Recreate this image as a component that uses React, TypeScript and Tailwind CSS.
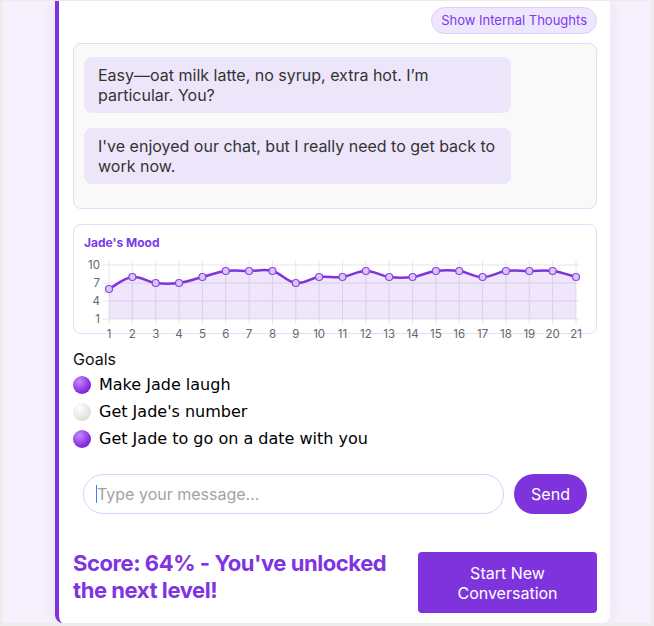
import React from "react";

const mood = [6, 8, 7, 7, 8, 9, 9, 9, 7, 8, 8, 9, 8, 8, 9, 9, 8, 9, 9, 9, 8];

const goals = [
    { label: "Make Jade laugh", done: true },
    { label: "Get Jade's number", done: false },
    { label: "Get Jade to go on a date with you", done: true },
];

const px = (i: number) => 35 + i * 23.35;
const py = (v: number) => 40 + (10 - v) * 6;

// chart.js-ish smoothing (tension 0.4)
function linePath() {
    const pts = mood.map((v, i) => [px(i), py(v)]);
    let d = `M${pts[0][0]},${pts[0][1]}`;
    for (let i = 0; i < pts.length - 1; i++) {
        const p0 = pts[i - 1] || pts[i];
        const p1 = pts[i];
        const p2 = pts[i + 1];
        const p3 = pts[i + 2] || p2;
        const t = 0.4 / 2;
        const c1 = [p1[0] + (p2[0] - p0[0]) * t, p1[1] + (p2[1] - p0[1]) * t];
        const c2 = [p2[0] - (p3[0] - p1[0]) * t, p2[1] - (p3[1] - p1[1]) * t];
        d += ` C${c1[0]},${c1[1]} ${c2[0]},${c2[1]} ${p2[0]},${p2[1]}`;
    }
    return d;
}

function MoodChart() {
    const line = linePath();
    const area = `${line} L${px(20)},94 L${px(0)},94 Z`;
    return (
        <svg width="524" height="112" className="absolute left-0 top-0 overflow-visible">
            {[10, 7, 4, 1].map((v) => (
                <g key={v}>
                    <line x1={28} x2={px(20) + 3} y1={py(v)} y2={py(v)} stroke="#e6e6e6" strokeWidth="1" />
                    <text x={26} y={py(v) + 4} textAnchor="end" fontSize="11.5" fill="#666" fontFamily="Inter, sans-serif">
                        {v}
                    </text>
                </g>
            ))}
            {mood.map((_, i) => (
                <g key={i}>
                    <line x1={px(i)} x2={px(i)} y1={36} y2={99} stroke="#e6e6e6" strokeWidth="1" />
                    <text x={px(i)} y={113} textAnchor="middle" fontSize="11.5" fill="#666" fontFamily="Inter, sans-serif">
                        {i + 1}
                    </text>
                </g>
            ))}
            <path d={area} fill="#7e33dd" fillOpacity="0.12" />
            <path d={line} fill="none" stroke="#7e33dd" strokeWidth="2.5" />
            {mood.map((v, i) => (
                <circle key={i} cx={px(i)} cy={py(v)} r="3.5" fill="#d9c6f6" stroke="#8a45e0" strokeWidth="1.2" />
            ))}
        </svg>
    );
}

export default function App() {
    return (
        <div className="w-[654px] h-[626px] bg-[#ececec] pt-px px-[3px] pb-[3px] font-['Inter',sans-serif]">
            <div className="h-full bg-[#f6f1fd] overflow-hidden">
                <div className="ml-[52px] w-[555px] h-full bg-white border-l-4 border-[#7e33dd] rounded-b-lg shadow-[0_0_18px_rgba(60,20,120,0.08)] pl-[14px] pr-[13px] pt-[6px] flex flex-col">
                    {/* Toggle */}
                    <div className="flex justify-end">
                        <button className="h-[27px] px-[9px] rounded-full bg-[#eee6fd] border border-[#dccdfb] text-[13px] text-[#7c3aed] leading-none">
                            Show Internal Thoughts
                        </button>
                    </div>

                    {/* Messages */}
                    <div className="mt-[9px] h-[166px] bg-[#f9f9f9] border border-[#e6dbfc] rounded-lg pt-[13px] px-[10px] flex flex-col gap-[15px]">
                        <div className="w-[427px] bg-[#ede6fb] rounded-lg px-[14px] py-[8px] text-[16px] leading-[20px] text-[#333]">
                            Easy—oat milk latte, no syrup, extra hot. I’m particular. You?
                        </div>
                        <div className="w-[427px] bg-[#ede6fb] rounded-lg px-[14px] py-[8px] text-[16px] leading-[20px] text-[#333]">
                            I've enjoyed our chat, but I really need to get back to work now.
                        </div>
                    </div>

                    {/* Mood chart */}
                    <div className="relative mt-[15px] h-[110px] border border-[#e6dbfc] rounded-lg">
                        <div className="absolute left-[10px] top-[11px] text-[12px] leading-[14px] font-bold text-[#7c3aed]">
                            Jade's Mood
                        </div>
                        <MoodChart />
                    </div>

                    {/* Goals */}
                    <div className="mt-[13px] text-[16px] leading-[24px] text-[#111]">Goals</div>
                    <ul className="flex flex-col">
                        {goals.map((g) => (
                            <li key={g.label} className="h-[27px] flex items-center gap-[8px] font-['Comic_Sans_MS','DejaVu_Sans',sans-serif] text-[16px] text-black">
                                <span
                                    className={
                                        g.done
                                            ? "w-[18px] h-[18px] rounded-full bg-[radial-gradient(circle_at_35%_30%,#c48cff,#8b2fe0_60%,#6b1fc0)]"
                                            : "w-[18px] h-[18px] rounded-full bg-[radial-gradient(circle_at_35%_30%,#ffffff,#e4e4e4_60%,#cfcfcf)]"
                                    }
                                />
                                {g.label}
                            </li>
                        ))}
                    </ul>

                    {/* Input */}
                    <div className="mt-[22px] px-[10px] flex gap-[10px]">
                        <div className="flex-1 h-[40px] rounded-full border border-[#dccdfb] flex items-center pl-[12px]">
                            <span className="w-px h-[18px] bg-[#3b82f6]" />
                            <span className="text-[16px] text-[#a3a3a3]">Type your message...</span>
                        </div>
                        <button className="w-[73px] h-[40px] rounded-full bg-[#7e33dd] text-white text-[16px]">Send</button>
                    </div>

                    {/* Score */}
                    <div className="mt-[38px] flex items-center justify-between">
                        <div className="w-[330px] text-[22px] leading-[27px] font-bold tracking-[-0.02em] text-[#8034df] -mt-[12px]">
                            Score: 64% - You've unlocked the next level!
                        </div>
                        <button className="w-[179px] h-[61px] rounded bg-[#7e33dd] text-white text-[16px] leading-[20px]">
                            Start New
                            <br />
                            Conversation
                        </button>
                    </div>
                </div>
            </div>
        </div>
    );
}
